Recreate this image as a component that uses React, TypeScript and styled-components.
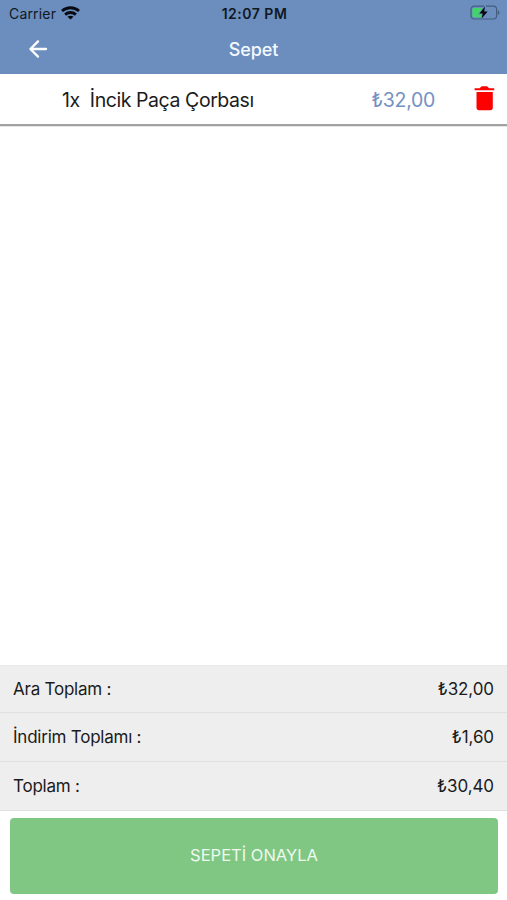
import React from 'react';
import styled, { createGlobalStyle } from 'styled-components';

const GlobalStyle = createGlobalStyle`
  * { box-sizing: border-box; }
  body {
    margin: 0;
    background: #fff;
    color: #1b1b1c;
    font-family: Inter, "Liberation Sans", sans-serif;
  }
`;

const Screen = styled.div`
  display: flex;
  flex-direction: column;
  height: 100vh;
  overflow: hidden;
`;

const Header = styled.header`
  flex: none;
  height: 74px;
  background: #6b8ebf;
`;

const StatusBar = styled.div`
  display: grid;
  grid-template-columns: 1fr auto 1fr;
  align-items: center;
  height: 27px;
  padding: 0 7px 0 9px;
  color: #101822;
`;

const Carrier = styled.div`
  display: flex;
  align-items: center;
  gap: 5px;
  font-size: 14px;
  letter-spacing: 0.17px;

  svg { margin-top: -2px; }
`;

const Clock = styled.div`
  font-size: 14px;
  font-weight: 600;
  letter-spacing: 0.5px;
`;

const BatterySlot = styled.div`
  display: flex;
  justify-content: flex-end;
  margin-top: -1px;
`;

const NavBar = styled.nav`
  display: grid;
  grid-template-columns: 1fr auto 1fr;
  align-items: center;
  height: 45px;
  color: #fff;
`;

const BackButton = styled.button`
  display: flex;
  justify-self: start;
  margin: -2px 0 0 28px;
  padding: 0;
  border: 0;
  background: none;
  color: inherit;
`;

const Title = styled.h1`
  margin: 0;
  font-size: 18px;
  font-weight: 500;
  letter-spacing: -0.1px;
  color: #f4f8ff;
`;

const CartItem = styled.div`
  display: flex;
  flex: none;
  align-items: center;
  height: 51px;
  padding: 1px 12px 0 62px;
  border-bottom: 1px solid #a3a3a3;
  background: #fff;
  box-shadow: 0 1px 0 #a0a0a0, 0 2px 0 #e6e6e6;
`;

const ItemName = styled.div`
  flex: 1;
  padding-top: 1px;
  font-size: 19.5px;
  letter-spacing: -0.43px;
  white-space: pre;
`;

const ItemPrice = styled.div`
  font-size: 19.5px;
  letter-spacing: -0.3px;
  color: #7291c2;
`;

const DeleteButton = styled.button`
  display: flex;
  margin: -2px 0 0 39px;
  padding: 0;
  border: 0;
  background: none;
`;

const Spacer = styled.main`
  flex: 1;
`;

const Totals = styled.section`
  flex: none;
  background: #eee;
  border-top: 1px solid #e9e9e9;
`;

const TotalRow = styled.div`
  display: flex;
  align-items: center;
  justify-content: space-between;
  height: 49px;
  padding: 0 13px;
  border-bottom: 1px solid #e0e0e1;
  font-size: 17px;
  letter-spacing: -0.23px;

  &:first-child {
    height: 47px;
    padding-bottom: 1px;
  }
`;

const Amount = styled.span`
  letter-spacing: -0.1px;
`;

const ConfirmButton = styled.button`
  flex: none;
  height: 76px;
  margin: 7px 9px 6px 10px;
  padding: 0 0 2px;
  border: 0;
  border-radius: 4px;
  background: #81c784;
  color: #edfaee;
  font: 400 16.5px Inter, "Liberation Sans", sans-serif;
`;

const WifiIcon = () => (
  <svg width="19" height="14" viewBox="0 0 19 14" fill="none" stroke="#080c12" strokeWidth="2.8">
    <path d="M1 5.1C5.8.6 13.2.6 18 5.1" />
    <path d="M4.1 8.6c3.1-2.8 7.7-2.8 10.8 0" />
    <path d="M9.5 13.6 6.5 10.8c1.6-1.5 4.4-1.5 6 0Z" fill="#080c12" stroke="none" />
  </svg>
);

const BatteryIcon = () => (
  <svg width="31" height="16" viewBox="0 0 31 16" fill="none">
    <rect x="2" y="1.2" width="25.6" height="12.8" rx="3.2" stroke="#435d80" strokeWidth="1.2" />
    <path d="M28.8 5.2c2.2 1 2.2 3.8 0 4.8Z" fill="#435d80" />
    <path d="M4.8 3h8.6v9.2H4.8A1.4 1.4 0 0 1 3.4 10.8V4.4A1.4 1.4 0 0 1 4.8 3Z" fill="#42d36b" />
    <path d="M16 1.6 10.4 8.6h3.3L12.5 13.8l6.2-7.3h-3.5Z" fill="#05080c" stroke="#6b8ebf" strokeWidth="1.6" paintOrder="stroke" />
  </svg>
);

const BackIcon = () => (
  <svg width="20" height="20" viewBox="0 0 20 20" fill="none" stroke="currentColor" strokeWidth="2.3" strokeLinecap="round" strokeLinejoin="round">
    <path d="M18 10H2.6M10 2.4 2.4 10l7.6 7.6" />
  </svg>
);

const TrashIcon = () => (
  <svg width="21" height="25" viewBox="0 0 21 25" fill="#f00">
    <path d="M.6 2.3h5.2Q7 .3 8.2.3h4.4q1.2 0 2.4 2h5.2v2H.6Z" />
    <path d="M2.5 6h16.3v15.8c0 1.5-1 2.4-2.4 2.4H4.9c-1.4 0-2.4-.9-2.4-2.4Z" />
  </svg>
);

const totals = [
  { label: 'Ara Toplam :', value: '₺32,00' },
  { label: 'İndirim Toplamı :', value: '₺1,60' },
  { label: 'Toplam :', value: '₺30,40' },
];

export default function App() {
  return (
    <>
      <GlobalStyle />
      <Screen>
        <Header>
          <StatusBar>
            <Carrier>Carrier <WifiIcon /></Carrier>
            <Clock>12:07 PM</Clock>
            <BatterySlot><BatteryIcon /></BatterySlot>
          </StatusBar>
          <NavBar>
            <BackButton aria-label="Geri"><BackIcon /></BackButton>
            <Title>Sepet</Title>
          </NavBar>
        </Header>
        <CartItem>
          <ItemName>{'1x  İncik Paça Çorbası'}</ItemName>
          <ItemPrice>₺32,00</ItemPrice>
          <DeleteButton aria-label="Sil"><TrashIcon /></DeleteButton>
        </CartItem>
        <Spacer />
        <Totals>
          {totals.map((row) => (
            <TotalRow key={row.label}>
              <span>{row.label}</span>
              <Amount>{row.value}</Amount>
            </TotalRow>
          ))}
        </Totals>
        <ConfirmButton>SEPETİ ONAYLA</ConfirmButton>
      </Screen>
    </>
  );
}
